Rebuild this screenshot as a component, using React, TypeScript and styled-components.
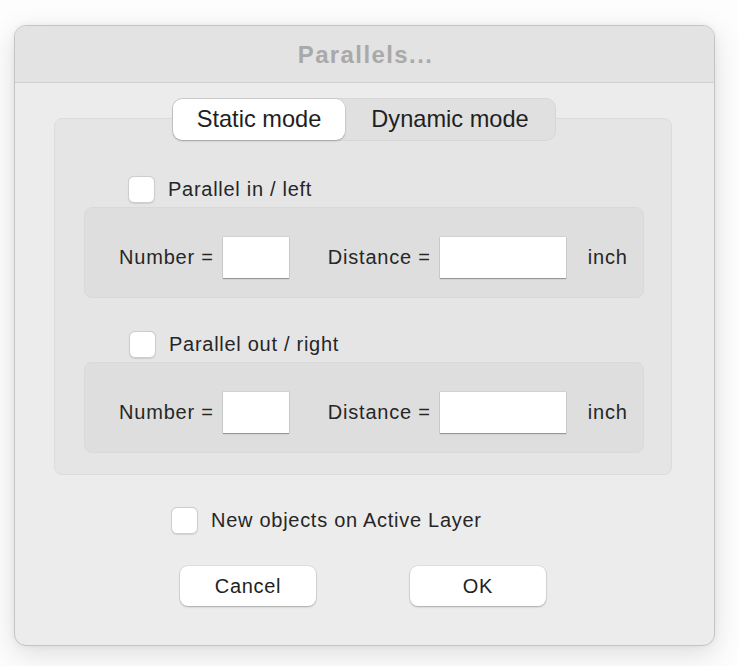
import React from "react";
import styled, { createGlobalStyle } from "styled-components";

const Global = createGlobalStyle`
  html, body { margin: 0; padding: 0; background: #ffffff; }
  body { font-family: "Liberation Sans", Arial, sans-serif; color: #262626; }
  * { box-sizing: border-box; }
`;

const Page = styled.div`
  width: 738px;
  height: 666px;
  padding: 25px 0 0 14px;
  background: #fdfdfd;
`;

const Window = styled.div`
  width: 701px;
  height: 621px;
  border-radius: 12px;
  background: #ececec;
  border: 1px solid #c4c4c4;
  box-shadow: 0 8px 28px rgba(0, 0, 0, 0.13), 0 0 6px rgba(0, 0, 0, 0.05);
  overflow: hidden;
  display: flex;
  flex-direction: column;
`;

const TitleBar = styled.div`
  height: 57px;
  flex: none;
  background: #e3e3e3;
  border-bottom: 1px solid #d0d0d0;
  display: flex;
  align-items: center;
  justify-content: center;
  padding-left: 2px;
`;

const Title = styled.div`
  font-size: 24px;
  font-weight: 700;
  letter-spacing: 1.4px;
  color: #a9a9a9;
  padding-top: 1px;
`;

const Content = styled.div`
  flex: 1;
  display: flex;
  flex-direction: column;
  padding: 15px 42px 0 39px;
`;

const TabView = styled.div`
  display: flex;
  flex-direction: column;
  align-items: center;
`;

const TabBar = styled.div`
  position: relative;
  z-index: 1;
  display: flex;
  border-radius: 10px;
  background: #e0e0e0;
  border: 1px solid #d6d6d6;
  margin-left: 2px;
`;

const Tab = styled.div<{ $active?: boolean; $w: number }>`
  width: ${(p) => p.$w}px;
  height: 41px;
  border-radius: 9px;
  display: flex;
  align-items: center;
  justify-content: center;
  font-size: 23.6px;
  color: #1f1f1f;
  background: ${(p) => (p.$active ? "#ffffff" : "transparent")};
  box-shadow: ${(p) =>
    p.$active ? "0 1px 2px rgba(0,0,0,0.22), 0 0 0 0.5px rgba(0,0,0,0.08)" : "none"};
`;

const Box = styled.div`
  align-self: stretch;
  margin-top: -23px;
  height: 357px;
  background: #e5e5e5;
  border: 1px solid #dcdcdc;
  border-radius: 8px;
  padding: 57px 27px 0 29px;
  display: flex;
  flex-direction: column;
`;

const CheckRow = styled.label<{ $indent: number; $mt?: number }>`
  display: flex;
  align-items: center;
  gap: 13px;
  padding-left: ${(p) => p.$indent}px;
  margin-top: ${(p) => p.$mt ?? 0}px;
  font-size: 20px;
  letter-spacing: 0.72px;
  height: 27px;
`;

const CheckBox = styled.span`
  width: 27px;
  height: 27px;
  flex: none;
  border-radius: 6px;
  background: #ffffff;
  border: 1px solid #cdcdcd;
  box-shadow: 0 0.5px 1px rgba(0, 0, 0, 0.1);
`;

const Section = styled.div<{ $gap: number }>`
  margin-top: ${(p) => p.$gap}px;
  height: 91px;
  background: #dedede;
  border: 1px solid #d9d9d9;
  border-radius: 8px;
  display: flex;
  align-items: center;
  padding: 10px 0 0 34px;
  font-size: 20px;
  letter-spacing: 0.8px;
`;

const FieldLabel = styled.span<{ $ml?: number }>`
  margin-left: ${(p) => p.$ml ?? 0}px;
  white-space: nowrap;
`;

const Field = styled.div<{ $w: number }>`
  width: ${(p) => p.$w}px;
  height: 41px;
  margin-left: 9px;
  background: #ffffff;
  box-shadow: 0 1px 1px rgba(0, 0, 0, 0.28), 0 0 0 0.5px rgba(0, 0, 0, 0.1);
`;

const Footer = styled.div`
  display: flex;
  flex-direction: column;
  padding-top: 32px;
`;

const Buttons = styled.div`
  display: flex;
  justify-content: center;
  gap: 94px;
  margin-top: 32px;
`;

const Button = styled.div`
  width: 136px;
  height: 40px;
  border-radius: 8px;
  background: #ffffff;
  box-shadow: 0 1px 2px rgba(0, 0, 0, 0.25), 0 0 0 0.5px rgba(0, 0, 0, 0.1);
  display: flex;
  align-items: center;
  justify-content: center;
  font-size: 20px;
  letter-spacing: 0.7px;
  color: #222;
`;

const FieldRow = ({ gap }: { gap: number }) => (
  <Section $gap={gap}>
    <FieldLabel>Number =</FieldLabel>
    <Field $w={66} />
    <FieldLabel $ml={39}>Distance =</FieldLabel>
    <Field $w={126} />
    <FieldLabel $ml={22}>inch</FieldLabel>
  </Section>
);

export default function App() {
  return (
    <>
      <Global />
      <Page>
        <Window>
          <TitleBar>
            <Title>Parallels...</Title>
          </TitleBar>
          <Content>
            <TabView>
              <TabBar>
                <Tab $active $w={172}>Static mode</Tab>
                <Tab $w={210}>Dynamic mode</Tab>
              </TabBar>
              <Box>
                <CheckRow $indent={44}>
                  <CheckBox />
                  Parallel in / left
                </CheckRow>
                <FieldRow gap={4} />
                <CheckRow $indent={45} $mt={33}>
                  <CheckBox />
                  Parallel out / right
                </CheckRow>
                <FieldRow gap={4} />
              </Box>
            </TabView>
            <Footer>
              <CheckRow $indent={117}>
                <CheckBox />
                New objects on Active Layer
              </CheckRow>
              <Buttons>
                <Button>Cancel</Button>
                <Button>OK</Button>
              </Buttons>
            </Footer>
          </Content>
        </Window>
      </Page>
    </>
  );
}
